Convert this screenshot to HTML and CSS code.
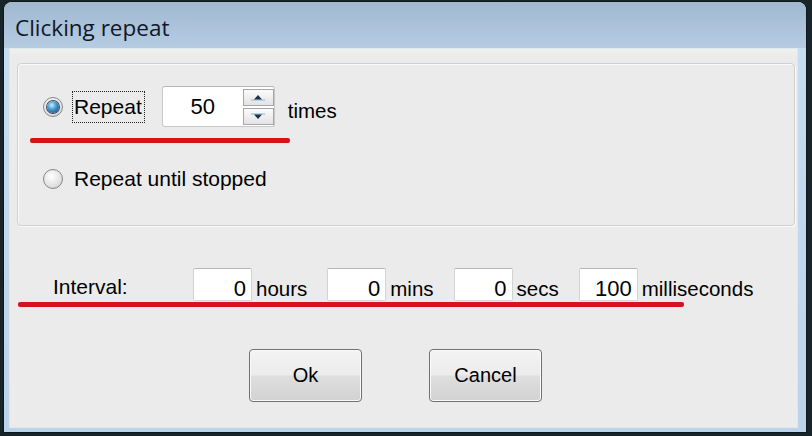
FILE: index.html
```html
<!DOCTYPE html>
<html lang="en">
<head>
  <meta charset="UTF-8">
  <meta name="viewport" content="width=device-width, initial-scale=1.0">
  <title>Clicking repeat</title>
  <link rel="stylesheet" href="styles.css">
</head>
<body>
  <div class="window">
    <div class="titlebar">Clicking repeat</div>
    <div class="frame">
      <div class="client">
        <div class="group">
          <div class="option option-repeat">
            <span class="radio checked"></span>
            <span class="focus">Repeat</span>
            <div class="spinner">
              <span class="spin-value">50</span>
              <div class="spin-buttons">
                <span class="spin-btn">
                  <svg width="14" height="9" viewBox="0 0 14 9">
                    <rect x="0" y="6" width="14" height="2" fill="#9cc8ea" opacity="0.7"/>
                    <polygon points="3,6.5 7,2 11,6.5" fill="#1f2d4a"/>
                  </svg>
                </span>
                <span class="spin-btn">
                  <svg width="14" height="9" viewBox="0 0 14 9">
                    <rect x="0" y="1" width="14" height="2" fill="#9cc8ea" opacity="0.7"/>
                    <polygon points="3,2.5 7,7 11,2.5" fill="#1f2d4a"/>
                  </svg>
                </span>
              </div>
            </div>
            <span class="unit unit-times">times</span>
          </div>
          <div class="option option-until">
            <span class="radio"></span>
            <span class="option-text">Repeat until stopped</span>
          </div>
        </div>

        <div class="interval">
          <span class="interval-label">Interval:</span>
          <span class="field">0</span><span class="unit">hours</span>
          <span class="field">0</span><span class="unit">mins</span>
          <span class="field">0</span><span class="unit">secs</span>
          <span class="field">100</span><span class="unit">milliseconds</span>
        </div>

        <div class="buttons">
          <button type="button">Ok</button>
          <button type="button">Cancel</button>
        </div>
      </div>
    </div>
    <div class="mark mark-repeat"></div>
    <div class="mark mark-interval"></div>
  </div>
</body>
</html>
```

FILE: styles.css
```css
body {
  margin: 0;
  width: 812px;
  height: 436px;
  overflow: hidden;
  background-color: #17252b;
  font-family: "Liberation Sans", Arial, sans-serif;
  color: #000;
}
.window {
  position: relative;
  margin: 2px 0 0 4px;
  width: 802px;
  height: 430px;
  display: flex;
  flex-direction: column;
  border-radius: 8px 8px 0 0;
  overflow: hidden;
  background-color: #c3d8ec;
  box-shadow: 0 0 0 1px #0c181d;
}
.titlebar {
  height: 41px;
  padding: 5px 0 0 11px;
  background: linear-gradient(#a0b8d0, #b5cce3);
  font-family: "Open Sans", sans-serif;
  font-size: 22.5px;
  line-height: 41px;
  color: #101826;
}
.frame {
  flex: 1;
  padding: 0 8px 4px 5px;
  background: linear-gradient(#c9ddf0, #bdd3e9);
}
.client {
  box-sizing: border-box;
  height: 100%;
  padding: 15px 0 0 8px;
  background: linear-gradient(#f1f1ef, #ebebeb 8px);
  box-shadow: inset 0 0 0 1px #dfe7ef;
}
.group {
  box-sizing: border-box;
  width: 778px;
  height: 163px;
  padding: 22px 0 0 25px;
  border: 1px solid #d0d0d0;
  border-radius: 4px;
  box-shadow: inset 1px 1px 0 #fafafa, 1px 1px 0 #fafafa;
}
.option {
  display: flex;
  align-items: center;
  font-size: 21px;
}
.option-repeat {
  height: 41px;
}
.option-until {
  height: 24px;
  margin-top: 40px;
}
.option-text {
  margin-left: 11px;
}
.radio {
  position: relative;
  box-sizing: border-box;
  width: 20px;
  height: 20px;
  flex: none;
  border: 1px solid #85888b;
  border-radius: 50%;
  background: radial-gradient(circle at 40% 35%, #ffffff, #e2e2e2 60%, #c2c2c2);
}
.radio.checked::after {
  content: "";
  position: absolute;
  left: 3px;
  top: 3px;
  width: 12px;
  height: 12px;
  border-radius: 50%;
  background: radial-gradient(circle at 40% 35%, #c4ecfd, #3f93ca 45%, #143f6e);
  box-shadow: 0 0 0 1px #3b4c5e;
}
.focus {
  margin-left: 9px;
  padding: 0 2px 0 1px;
  border: 1px dotted #222;
  line-height: 30px;
}
.spinner {
  display: flex;
  box-sizing: border-box;
  width: 113px;
  height: 41px;
  margin-left: 17px;
  border: 1px solid #c6c8cc;
  border-top-color: #b3b5ba;
  border-radius: 3px;
  background-color: #fff;
}
.spin-value {
  flex: 1;
  text-align: center;
  font-size: 22px;
  line-height: 40px;
}
.spin-buttons {
  display: flex;
  flex-direction: column;
  gap: 2px;
  padding: 2px 0 0;
}
.spin-btn {
  box-sizing: border-box;
  width: 31px;
  height: 17px;
  display: flex;
  align-items: center;
  justify-content: center;
  border: 1px solid #a4a6a9;
  background: linear-gradient(#fbfbfb, #e3e3e3);
}
.unit {
  font-size: 20.5px;
}
.unit-times {
  margin-left: 13px;
  position: relative;
  top: 4px;
}
.interval {
  display: flex;
  align-items: baseline;
  margin-top: 42px;
  padding-left: 36px;
}
.interval-label {
  width: 140px;
  font-size: 21px;
  position: relative;
  top: -2px;
}
.field {
  box-sizing: border-box;
  width: 59px;
  height: 33px;
  padding: 8px 5px 0 0;
  border: 1px solid #d2d3d6;
  border-top-color: #b4b6ba;
  border-radius: 2px;
  background-color: #fff;
  text-align: right;
  font-size: 22px;
  line-height: 24px;
}
.interval .unit {
  margin: 0 20px 0 4px;
}
.buttons {
  display: flex;
  gap: 67px;
  margin-top: 48px;
  padding-left: 232px;
}
.buttons button {
  width: 113px;
  height: 53px;
  border: 1px solid #707070;
  border-radius: 4px;
  background: linear-gradient(#f3f3f3, #ececec 48%, #dedede 52%, #d2d2d2);
  box-shadow: inset 0 0 0 1px #fbfbfb;
  font-family: "Liberation Sans", Arial, sans-serif;
  font-size: 20px;
  color: #000;
}
.mark {
  position: absolute;
  height: 5px;
  border-radius: 2px;
  background-color: #d6121c;
}
.mark-repeat {
  left: 26px;
  top: 136px;
  width: 260px;
}
.mark-interval {
  left: 14px;
  top: 300px;
  width: 666px;
}
```
